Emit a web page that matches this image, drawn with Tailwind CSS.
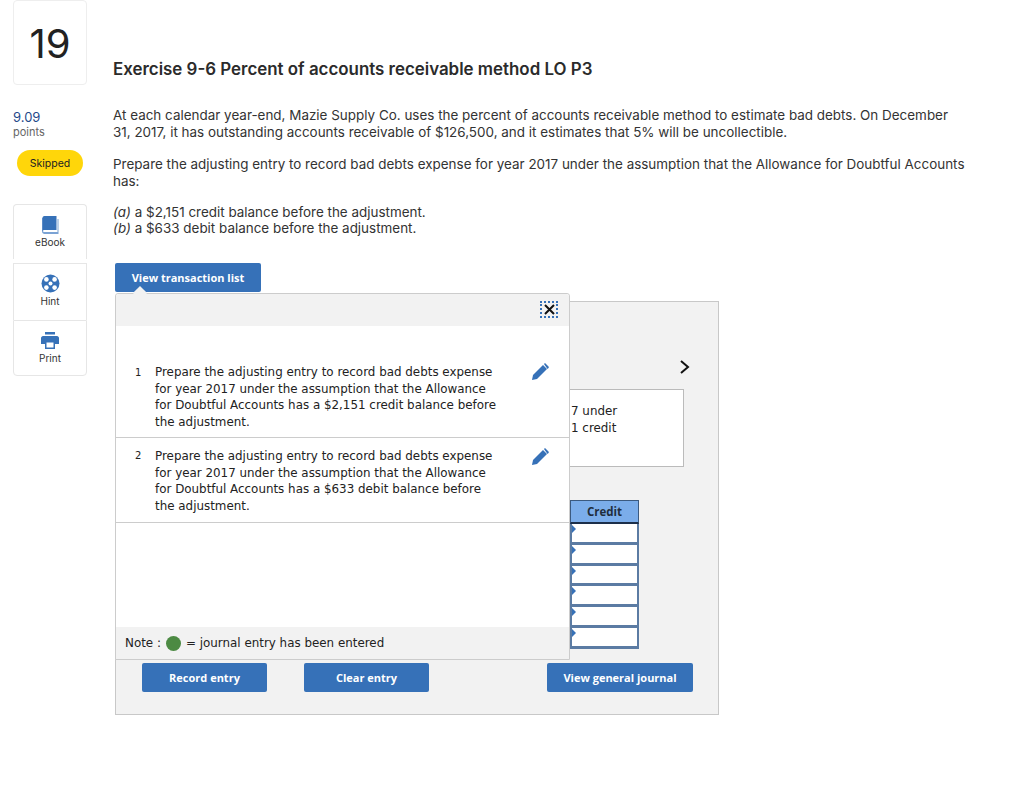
<!DOCTYPE html>
<html lang="en">
<head>
  <meta charset="UTF-8" />
  <title>Exercise 9-6</title>
  <script src="https://cdn.jsdelivr.net/npm/@tailwindcss/browser@4"></script>
</head>
<body class="bg-white text-[#333] font-['Inter','Liberation_Sans',sans-serif]">
  <div class="relative w-[1024px] h-[793px] overflow-hidden flex">
    <!-- Left rail -->
    <div class="w-[113px] shrink-0 pl-[13px]">
      <div class="w-[74px] h-[85px] pt-[3px] border border-[#eee] rounded flex items-center justify-center text-[40px] font-normal text-[#222]">19</div>
      <div class="mt-[24px] text-[13px] leading-[16px] text-[#1f4a8a]">9.09</div>
      <div class="text-[11px] leading-[15px] text-[#666]">points</div>
      <div class="mt-[10px] ml-[4px] w-[66px] h-[26px] pt-[1px] rounded-full bg-[#ffd60a] flex items-center justify-center text-[10.500px] text-[#222]">Skipped</div>
      <div class="mt-[28px] w-[74px] text-[10px] text-[#333]">
        <div class="h-[55px] flex flex-col items-center pt-[11px] border border-b-0 border-[#e6e6e6] rounded-t">
          <svg width="17" height="18" viewBox="0 0 17 18"><path d="M1 2H0v13.500C0 17 1.200 18 2.500 18H16.500V3h-1v13H2.500c-1 0-1.500-.5-1.500-1z" fill="#7ba3d4"/><path d="M0.500 2c0-1 .5-2 2-2h12v14H2.500c-1 0-2 .5-2 1.500z" fill="#3671b8"/></svg>
          <div class="mt-[1px] leading-[14px]">eBook</div>
        </div>
        <div class="mt-[4px] h-[57px] flex flex-col items-center pt-[10px] border-x border-t border-[#e6e6e6]">
          <svg width="19" height="19" viewBox="0 0 19 19"><circle cx="9.500" cy="9.500" r="9" fill="#3671b8"/><circle cx="5.400" cy="5.400" r="2.300" fill="#fff"/><circle cx="13.600" cy="5.400" r="2.300" fill="#fff"/><circle cx="5.400" cy="13.600" r="2.300" fill="#fff"/><circle cx="13.600" cy="13.600" r="2.300" fill="#fff"/><circle cx="9.500" cy="9.500" r="2" fill="#fff"/></svg>
          <div class="mt-[1px] leading-[14px]">Hint</div>
        </div>
        <div class="h-[56px] flex flex-col items-center pt-[11px] border border-[#e6e6e6] rounded-b">
          <svg width="18" height="17" viewBox="0 0 18 17"><path d="M4 0h10v2.500H4z" fill="#3671b8"/><path d="M2 4h14c1 0 2 1 2 2v6h-4V9H4v3H0V6c0-1 1-2 2-2z" fill="#3671b8"/><path d="M4 9h10v8H4z" fill="#3671b8"/><path d="M5.500 10.500h7v5h-7z" fill="#fff"/></svg>
          <div class="mt-[2px] leading-[14px]">Print</div>
        </div>
      </div>
    </div>

    <!-- Question -->
    <div class="flex-1 pt-[59px] pr-[57px] text-[13.450px] leading-[17px] text-[#333]">
      <h1 class="text-[16.900px] leading-[20px] font-semibold text-[#2b2b2b]">Exercise 9-6 Percent of accounts receivable method LO P3</h1>
      <p class="mt-[28px]">At each calendar year-end, Mazie Supply Co. uses the percent of accounts receivable method to estimate bad debts. On December 31, 2017, it has outstanding accounts receivable of $126,500, and it estimates that 5% will be uncollectible.</p>
      <p class="mt-[15px]">Prepare the adjusting entry to record bad debts expense for year 2017 under the assumption that the Allowance for Doubtful Accounts has:</p>
      <p class="mt-[14px] leading-[16px]"><i>(a)</i> a $2,151 credit balance before the adjustment.<br /><i>(b)</i> a $633 debit balance before the adjustment.</p>
      <button class="block mt-[27px] ml-[2px] w-[146px] h-[29px] rounded-[2px] bg-[#3671b8] text-white text-[11px] font-bold font-['Open_Sans',sans-serif]">View transaction list</button>
    </div>

    <!-- Journal panel behind the popup -->
    <div class="absolute left-[115px] top-[301px] w-[604px] h-[414px] bg-[#f2f2f2] border border-[#c8c8c8] font-['DejaVu_Sans',sans-serif]">
      <svg class="absolute left-[563px] top-[57px]" width="12" height="16" viewBox="0 0 12 16"><path d="M2 2l7 6-7 6" fill="none" stroke="#111" stroke-width="2"/></svg>
      <div class="absolute left-[300px] top-[87px] w-[268px] h-[78px] bg-white border border-[#bbb] pl-[154px] pt-[13px] text-[11.900px] leading-[16.500px] text-[#222] whitespace-nowrap">7 under<br />1 credit</div>
      <div class="absolute left-[454px] top-[198px] w-[69px] font-['Open_Sans',sans-serif]">
        <div class="h-[24px] bg-[#7badea] border border-[#3b5a80] border-b-2 border-b-[#1c2f4a] flex items-center justify-center text-[11.500px] font-bold text-[#1f2d3d]">Credit</div>
        <div class="relative h-[20.800px] bg-white border-x-2 border-b-[3px] border-[#5b7ba3]"><span class="absolute left-0 top-[1px] border-y-[4px] border-y-transparent border-l-[4px] border-l-[#3671b8]"></span></div>
        <div class="relative h-[20.800px] bg-white border-x-2 border-b-[3px] border-[#5b7ba3]"><span class="absolute left-0 top-[1px] border-y-[4px] border-y-transparent border-l-[4px] border-l-[#3671b8]"></span></div>
        <div class="relative h-[20.800px] bg-white border-x-2 border-b-[3px] border-[#5b7ba3]"><span class="absolute left-0 top-[1px] border-y-[4px] border-y-transparent border-l-[4px] border-l-[#3671b8]"></span></div>
        <div class="relative h-[20.800px] bg-white border-x-2 border-b-[3px] border-[#5b7ba3]"><span class="absolute left-0 top-[1px] border-y-[4px] border-y-transparent border-l-[4px] border-l-[#3671b8]"></span></div>
        <div class="relative h-[20.800px] bg-white border-x-2 border-b-[3px] border-[#5b7ba3]"><span class="absolute left-0 top-[1px] border-y-[4px] border-y-transparent border-l-[4px] border-l-[#3671b8]"></span></div>
        <div class="relative h-[20.800px] bg-white border-x-2 border-b-[3px] border-[#5b7ba3]"><span class="absolute left-0 top-[1px] border-y-[4px] border-y-transparent border-l-[4px] border-l-[#3671b8]"></span></div>
      </div>
      <div class="absolute left-[26px] top-[361px] right-[25px] flex text-[11px] font-bold text-white font-['Open_Sans',sans-serif]">
        <button class="w-[125px] h-[29px] pt-[1px] rounded-[2px] bg-[#3671b8]">Record entry</button>
        <button class="ml-[37px] w-[125px] h-[29px] pt-[1px] rounded-[2px] bg-[#3671b8]">Clear entry</button>
        <button class="ml-auto w-[146px] h-[29px] pt-[1px] rounded-[2px] bg-[#3671b8]">View general journal</button>
      </div>
    </div>

    <!-- Transaction list popup -->
    <div class="absolute left-[115px] top-[293px] w-[455px] h-[367px] bg-white border border-[#ccc] rounded-t-[3px] flex flex-col font-['DejaVu_Sans',sans-serif] text-[11.900px] leading-[16.500px] text-[#222]">
      <span class="absolute left-[19px] top-[-6px] w-[10px] h-[10px] rotate-45 bg-[#f2f2f2]"></span>
      <div class="h-[32px] bg-[#f2f2f2] rounded-t-[3px] flex justify-end items-center pr-[11px] pb-[2px] shrink-0">
        <div class="w-[18px] h-[17px] border-2 border-dotted border-[#3671b8] flex items-center justify-center">
          <svg width="11" height="11" viewBox="0 0 11 11"><path d="M1 1l9 9M10 1l-9 9" stroke="#111" stroke-width="2"/></svg>
        </div>
      </div>
      <div class="h-[112px] shrink-0 flex items-end border-b border-[#ccc] pb-[7px]">
        <span class="w-[20px] ml-[19px] text-[10px] self-start mt-[39px]">1</span>
        <p class="w-[345px]">Prepare the adjusting entry to record bad debts expense for year 2017 under the assumption that the Allowance for Doubtful Accounts has a $2,151 credit balance before the adjustment.</p>
        <svg class="self-start mt-[37px] ml-[32px]" width="17" height="17" viewBox="0 0 17 17"><path d="M0 17l1-5L11 2l4 4L5 16z" fill="#3671b8"/><path d="M12 1l1-1 3.500 3.500c.5.5.5 1 0 1.500l-1 1z" fill="#3671b8"/></svg>
      </div>
      <div class="h-[85px] shrink-0 flex border-b border-[#ccc] pt-[10px]">
        <span class="w-[20px] ml-[19px] text-[10px]">2</span>
        <p class="w-[345px]">Prepare the adjusting entry to record bad debts expense for year 2017 under the assumption that the Allowance for Doubtful Accounts has a $633 debit balance before the adjustment.</p>
        <svg class="ml-[32px]" width="17" height="17" viewBox="0 0 17 17"><path d="M0 17l1-5L11 2l4 4L5 16z" fill="#3671b8"/><path d="M12 1l1-1 3.500 3.500c.5.5.5 1 0 1.500l-1 1z" fill="#3671b8"/></svg>
      </div>
      <div class="flex-1"></div>
      <div class="h-[32px] shrink-0 bg-[#f2f2f2] flex items-center pl-[9px] pt-[1px] whitespace-nowrap">Note :<span class="ml-[5px] mr-[5px] w-[15px] h-[15px] rounded-full bg-[#4c8a43]"></span>= journal entry has been entered</div>
    </div>
  </div>
</body>
</html>
